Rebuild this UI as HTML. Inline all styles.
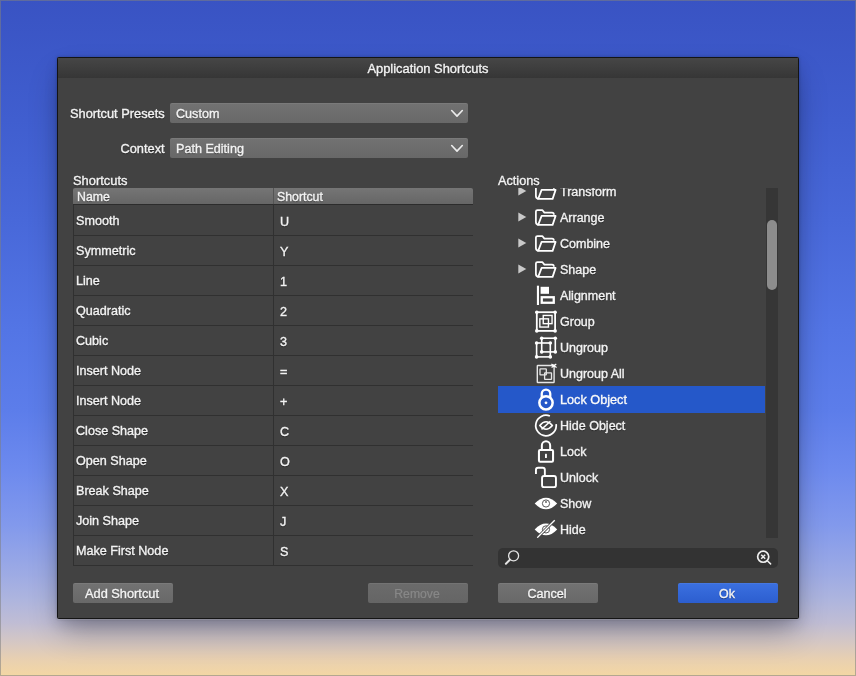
<!DOCTYPE html>
<html lang="en"><head><meta charset="utf-8"><title>Application Shortcuts</title>
<style>
html,body{margin:0;padding:0}
body{width:856px;height:676px;overflow:hidden;position:relative;font-family:"Liberation Sans",sans-serif;
background:linear-gradient(to bottom,#3953c3 0px,#405ecf 120px,#4868d9 220px,#5375e5 330px,#5c7dea 410px,#6d8aee 470px,#8299ec 525px,#9eabe4 575px,#aeb5de 600px,#c0bdd4 623px,#d6c8c3 643px,#e8d0b1 659px,#f4d7a3 676px)}
#frame{position:absolute;left:0;top:0;width:854px;height:674px;border:1px solid rgba(128,128,128,.55);z-index:5;pointer-events:none}
#win{position:absolute;left:57px;top:57px;width:740px;height:560px;border:1px solid #141414;border-radius:1.5px;background:#424242;
box-shadow:0 1px 0 rgba(215,215,225,.22),0 16px 30px -5px rgba(0,0,0,.30),0 6px 14px -2px rgba(0,0,0,.16),0 0 3px rgba(0,0,0,.25)}
#tb{position:absolute;left:0;top:0;width:740px;height:20px;background:linear-gradient(#464646,#363636)}
.a{position:absolute}
.t{position:absolute;line-height:16px;height:16px;white-space:nowrap;color:#f3f3f3;text-shadow:0 1px 1px rgba(0,0,0,.45);-webkit-text-stroke:0.35px #f3f3f3;will-change:transform}
.dd{position:absolute;left:112px;width:298px;height:20px;border-radius:2px;background:linear-gradient(#727272,#686868);box-shadow:inset 0 1px 0 rgba(255,255,255,.06)}
.btn{position:absolute;top:525px;width:100px;height:20px;border-radius:2px;background:linear-gradient(#727272,#686868);box-shadow:inset 0 1px 0 rgba(255,255,255,.06)}
.hl{position:absolute;left:15px;width:400px;height:1px;background:#303030}
.ic{position:absolute;overflow:visible}
</style></head><body>
<div id="win">
<div id="tb"></div>

<div class="t" style="left:-1px;top:3px;font-size:12.9px;width:740px;text-align:center;left:0;">Application Shortcuts</div>
<div class="t" style="left:12px;top:48px;font-size:12.8px;">Shortcut Presets</div>
<div class="t" style="left:12px;top:83px;font-size:12.8px;width:94.6px;text-align:right;">Context</div>
<div class="dd" style="top:45px"></div><div class="dd" style="top:80px"></div>
<svg class="ic" style="left:392px;top:51.400000000000006px" width="14" height="9" viewBox="0 0 14 9"><path d="M1.7 1.5 L7 7.1 L12.3 1.5" fill="none" stroke="#ececec" stroke-width="1.6" stroke-linecap="round" stroke-linejoin="round"/></svg>
<svg class="ic" style="left:392px;top:86.4px" width="14" height="9" viewBox="0 0 14 9"><path d="M1.7 1.5 L7 7.1 L12.3 1.5" fill="none" stroke="#ececec" stroke-width="1.6" stroke-linecap="round" stroke-linejoin="round"/></svg>
<div class="t" style="left:118px;top:48px;font-size:12.6px;">Custom</div>
<div class="t" style="left:118px;top:83px;font-size:12.6px;">Path Editing</div>
<div class="t" style="left:15px;top:115px;font-size:12.9px;">Shortcuts</div>
<div class="t" style="left:440px;top:115px;font-size:12.7px;">Actions</div>
<div class="a" style="left:15px;top:130px;width:400px;height:16px;border-radius:2px 2px 0 0;background:linear-gradient(#757575,#666666)"></div>
<div class="a" style="left:15px;top:146px;width:400px;height:1px;background:#2c2c2c"></div>
<div class="a" style="left:15px;top:147px;width:1px;height:361px;background:#303030"></div>
<div class="a" style="left:215px;top:130px;width:1px;height:16px;background:#545454"></div>
<div class="a" style="left:215px;top:146px;width:1px;height:362px;background:#303030"></div>
<div class="t" style="left:19px;top:131px;font-size:12.3px;">Name</div>
<div class="t" style="left:219.39999999999998px;top:131px;font-size:12.3px;">Shortcut</div>
<div class="t" style="left:18.200000000000003px;top:155px;font-size:12.6px;">Smooth</div>
<div class="t" style="left:222px;top:156px;font-size:12.6px;">U</div>
<div class="hl" style="top:177px"></div>
<div class="t" style="left:18.200000000000003px;top:185px;font-size:12.6px;">Symmetric</div>
<div class="t" style="left:222px;top:186px;font-size:12.6px;">Y</div>
<div class="hl" style="top:207px"></div>
<div class="t" style="left:18.200000000000003px;top:215px;font-size:12.6px;">Line</div>
<div class="t" style="left:222px;top:216px;font-size:12.6px;">1</div>
<div class="hl" style="top:237px"></div>
<div class="t" style="left:18.200000000000003px;top:245px;font-size:12.6px;">Quadratic</div>
<div class="t" style="left:222px;top:246px;font-size:12.6px;">2</div>
<div class="hl" style="top:267px"></div>
<div class="t" style="left:18.200000000000003px;top:275px;font-size:12.6px;">Cubic</div>
<div class="t" style="left:222px;top:276px;font-size:12.6px;">3</div>
<div class="hl" style="top:297px"></div>
<div class="t" style="left:18.200000000000003px;top:305px;font-size:12.6px;">Insert Node</div>
<div class="t" style="left:222px;top:306px;font-size:12.6px;">=</div>
<div class="hl" style="top:327px"></div>
<div class="t" style="left:18.200000000000003px;top:335px;font-size:12.6px;">Insert Node</div>
<div class="t" style="left:222px;top:336px;font-size:12.6px;">+</div>
<div class="hl" style="top:357px"></div>
<div class="t" style="left:18.200000000000003px;top:365px;font-size:12.6px;">Close Shape</div>
<div class="t" style="left:222px;top:366px;font-size:12.6px;">C</div>
<div class="hl" style="top:387px"></div>
<div class="t" style="left:18.200000000000003px;top:395px;font-size:12.6px;">Open Shape</div>
<div class="t" style="left:222px;top:396px;font-size:12.6px;">O</div>
<div class="hl" style="top:417px"></div>
<div class="t" style="left:18.200000000000003px;top:425px;font-size:12.6px;">Break Shape</div>
<div class="t" style="left:222px;top:426px;font-size:12.6px;">X</div>
<div class="hl" style="top:447px"></div>
<div class="t" style="left:18.200000000000003px;top:455px;font-size:12.6px;">Join Shape</div>
<div class="t" style="left:222px;top:456px;font-size:12.6px;">J</div>
<div class="hl" style="top:477px"></div>
<div class="t" style="left:18.200000000000003px;top:485px;font-size:12.6px;">Make First Node</div>
<div class="t" style="left:222px;top:486px;font-size:12.6px;">S</div>
<div class="hl" style="top:507px"></div>
<div class="btn" style="left:15px"></div>
<div class="btn" style="left:310px;background:linear-gradient(#6b6b6b,#656565)"></div>
<div class="btn" style="left:440px"></div>
<div class="btn" style="left:620px;background:linear-gradient(#3b70e0,#2c5ecf)"></div>
<div class="t" style="left:13.799999999999997px;top:528px;font-size:12.8px;width:100px;text-align:center;">Add Shortcut</div>
<div class="t" style="left:309px;top:528px;font-size:12.2px;width:100px;text-align:center;color:#888;text-shadow:none;-webkit-text-stroke:0.2px #888;">Remove</div>
<div class="t" style="left:439px;top:528px;font-size:12.6px;width:100px;text-align:center;">Cancel</div>
<div class="t" style="left:619px;top:528px;font-size:12.4px;width:100px;text-align:center;">Ok</div>
<div class="a" id="list" style="left:440px;top:130px;width:268px;height:350px;overflow:hidden">
<div class="a" style="left:0;top:198px;width:267px;height:27px;background:#2558c9"></div>
<div class="t" style="left:62.0px;top:-4px;font-size:12.5px;">Transform</div>
<svg class="ic" style="left:20.2px;top:-2.4px" width="9" height="10" viewBox="0 0 9 10"><path d="M0.3 0.4 L8.3 4.9 L0.3 9.4 Z" fill="#c9c9c9"/></svg>
<svg class="ic" style="left:36px;top:-6.0px" width="26" height="20" viewBox="0 0 26 20"><path d="M4.4 16.9 Q1.9 16.4 1.9 14 V3.6 Q1.9 2 3.5 2 H8.3 L10.4 4.6 H18 Q19.9 4.6 19.9 6.8" fill="none" stroke="#fff" stroke-width="1.75" stroke-linejoin="round"/><path d="M7.6 7.9 H21.6 L18.6 16.9 H4.2 Z" fill="none" stroke="#fff" stroke-width="1.75" stroke-linejoin="round"/></svg>
<div class="t" style="left:62.0px;top:22px;font-size:12.5px;">Arrange</div>
<svg class="ic" style="left:20.2px;top:23.6px" width="9" height="10" viewBox="0 0 9 10"><path d="M0.3 0.4 L8.3 4.9 L0.3 9.4 Z" fill="#c9c9c9"/></svg>
<svg class="ic" style="left:36px;top:20.0px" width="26" height="20" viewBox="0 0 26 20"><path d="M4.4 16.9 Q1.9 16.4 1.9 14 V3.6 Q1.9 2 3.5 2 H8.3 L10.4 4.6 H18 Q19.9 4.6 19.9 6.8" fill="none" stroke="#fff" stroke-width="1.75" stroke-linejoin="round"/><path d="M7.6 7.9 H21.6 L18.6 16.9 H4.2 Z" fill="none" stroke="#fff" stroke-width="1.75" stroke-linejoin="round"/></svg>
<div class="t" style="left:62.0px;top:48px;font-size:12.5px;">Combine</div>
<svg class="ic" style="left:20.2px;top:49.6px" width="9" height="10" viewBox="0 0 9 10"><path d="M0.3 0.4 L8.3 4.9 L0.3 9.4 Z" fill="#c9c9c9"/></svg>
<svg class="ic" style="left:36px;top:46.0px" width="26" height="20" viewBox="0 0 26 20"><path d="M4.4 16.9 Q1.9 16.4 1.9 14 V3.6 Q1.9 2 3.5 2 H8.3 L10.4 4.6 H18 Q19.9 4.6 19.9 6.8" fill="none" stroke="#fff" stroke-width="1.75" stroke-linejoin="round"/><path d="M7.6 7.9 H21.6 L18.6 16.9 H4.2 Z" fill="none" stroke="#fff" stroke-width="1.75" stroke-linejoin="round"/></svg>
<div class="t" style="left:62.0px;top:74px;font-size:12.5px;">Shape</div>
<svg class="ic" style="left:20.2px;top:75.6px" width="9" height="10" viewBox="0 0 9 10"><path d="M0.3 0.4 L8.3 4.9 L0.3 9.4 Z" fill="#c9c9c9"/></svg>
<svg class="ic" style="left:36px;top:72.0px" width="26" height="20" viewBox="0 0 26 20"><path d="M4.4 16.9 Q1.9 16.4 1.9 14 V3.6 Q1.9 2 3.5 2 H8.3 L10.4 4.6 H18 Q19.9 4.6 19.9 6.8" fill="none" stroke="#fff" stroke-width="1.75" stroke-linejoin="round"/><path d="M7.6 7.9 H21.6 L18.6 16.9 H4.2 Z" fill="none" stroke="#fff" stroke-width="1.75" stroke-linejoin="round"/></svg>
<div class="t" style="left:62.0px;top:100px;font-size:12.5px;">Alignment</div>
<div class="t" style="left:62.0px;top:126px;font-size:12.5px;">Group</div>
<div class="t" style="left:62.0px;top:152px;font-size:12.5px;">Ungroup</div>
<div class="t" style="left:62.0px;top:178px;font-size:12.5px;">Ungroup All</div>
<div class="t" style="left:62.0px;top:204px;font-size:12.7px;text-shadow:none;color:#fff;">Lock Object</div>
<div class="t" style="left:62.0px;top:230px;font-size:12.5px;">Hide Object</div>
<div class="t" style="left:62.0px;top:256px;font-size:12.5px;">Lock</div>
<div class="t" style="left:62.0px;top:282px;font-size:12.5px;">Unlock</div>
<div class="t" style="left:62.0px;top:308px;font-size:12.5px;">Show</div>
<div class="t" style="left:62.0px;top:334px;font-size:12.5px;">Hide</div>
<!-- Alignment : abs origin 528,282 -->
<svg class="ic" style="left:30px;top:94px" width="36" height="28" viewBox="0 0 36 28"><rect x="8.9" y="3.7" width="2.1" height="19.3" fill="#fff"/><rect x="12.6" y="4.8" width="8.4" height="7" fill="#fff"/><rect x="13.75" y="15.25" width="12" height="5.5" fill="none" stroke="#fff" stroke-width="2.3"/></svg>
<!-- Group : origin 528,308 -->
<svg class="ic" style="left:30px;top:120px" width="36" height="28" viewBox="0 0 36 28"><rect x="8.8" y="4.2" width="18.3" height="18.7" fill="none" stroke="#fff" stroke-width="1.8"/><g fill="#fff"><circle cx="8.8" cy="4.2" r="1.8"/><circle cx="27.1" cy="4.2" r="1.8"/><circle cx="8.8" cy="22.9" r="1.8"/><circle cx="27.1" cy="22.9" r="1.8"/></g><rect x="15.25" y="7.45" width="8.8" height="8.2" fill="none" stroke="#fff" stroke-width="1.4"/><rect x="11.85" y="10.85" width="8.6" height="8.2" fill="none" stroke="#fff" stroke-width="1.4"/></svg>
<!-- Ungroup : origin 528,334 -->
<svg class="ic" style="left:30px;top:146px" width="36" height="28" viewBox="0 0 36 28"><rect x="13.7" y="4.2" width="13.6" height="13.7" fill="none" stroke="#fff" stroke-width="1.6"/><rect x="8.6" y="9" width="13.7" height="13.9" fill="none" stroke="#fff" stroke-width="1.6"/><g fill="#fff"><circle cx="13.7" cy="4.2" r="1.8"/><circle cx="27.3" cy="4.2" r="1.8"/><circle cx="13.7" cy="17.9" r="1.8"/><circle cx="27.3" cy="17.9" r="1.8"/><circle cx="8.6" cy="9" r="1.8"/><circle cx="22.3" cy="9" r="1.8"/><circle cx="8.6" cy="22.9" r="1.8"/><circle cx="22.3" cy="22.9" r="1.8"/></g></svg>
<!-- Ungroup All : origin 528,360 -->
<svg class="ic" style="left:30px;top:172px" width="36" height="28" viewBox="0 0 36 28"><rect x="9.3" y="5.5" width="16.8" height="17" rx="0.6" fill="none" stroke="#e6e6e6" stroke-width="1.4"/><rect x="12" y="8.8" width="6.3" height="6.1" rx="0.4" fill="none" stroke="#e6e6e6" stroke-width="1.3"/><rect x="16.6" y="12.8" width="6.9" height="6.5" rx="0.4" fill="none" stroke="#e6e6e6" stroke-width="1.3"/><path d="M23.4 4.1 L28.6 7.6 M28.3 3.9 L23.6 7.5" stroke="#fff" stroke-width="1.2" fill="none"/><circle cx="25.9" cy="5.8" r="1.3" fill="#fff"/></svg>
<!-- Lock Object : origin 528,386 -->
<svg class="ic" style="left:30px;top:198px" width="36" height="28" viewBox="0 0 36 28"><circle cx="18" cy="16.8" r="6.65" fill="none" stroke="#fff" stroke-width="2.5"/><circle cx="18" cy="16.8" r="1.4" fill="#fff"/><path d="M13.75 11.6 V7.8 A4.25 4.25 0 0 1 22.25 7.8 V11.6" fill="none" stroke="#fff" stroke-width="2.3"/></svg>
<!-- Hide Object : origin 528,412 -->
<svg class="ic" style="left:30px;top:224px" width="36" height="28" viewBox="0 0 36 28"><path d="M28.15 12.1 A10.25 10.25 0 1 1 21.9 4.05" fill="none" stroke="#fff" stroke-width="1.75"/><path d="M11.8 13.5 Q18 6 24.4 13.5 Q18 21 11.8 13.5 Z" fill="none" stroke="#fff" stroke-width="1.6" stroke-linejoin="round"/><path d="M22.4 9.3 L13.5 17.4" stroke="#fff" stroke-width="1.5" fill="none"/></svg>
<!-- Lock : origin 528,438 -->
<svg class="ic" style="left:30px;top:250px" width="36" height="28" viewBox="0 0 36 28"><rect x="10.95" y="11.95" width="14.1" height="11.8" rx="1.2" fill="none" stroke="#fff" stroke-width="2.05"/><path d="M13.85 11.2 V7.45 A4.15 4.15 0 0 1 22.15 7.45 V11.2" fill="none" stroke="#fff" stroke-width="2.0"/><rect x="17" y="15.8" width="1.9" height="4.2" rx="0.5" fill="#fff"/></svg>
<!-- Unlock : origin 528,464 -->
<svg class="ic" style="left:30px;top:276px" width="36" height="28" viewBox="0 0 36 28"><rect x="14.05" y="11.95" width="13.9" height="11.2" rx="2" fill="none" stroke="#fff" stroke-width="1.9"/><path d="M7.95 10.1 V5.9 Q7.95 3.75 10.1 3.75 H14.7 Q16.85 3.75 16.85 5.9 V11" fill="none" stroke="#fff" stroke-width="1.9"/></svg>
<!-- Show : origin 528,490 -->
<svg class="ic" style="left:30px;top:302px" width="36" height="28" viewBox="0 0 36 28"><path d="M6.7 13.5 Q18 1.8 29.2 13.5 Q18 25.2 6.7 13.5 Z" fill="#fff"/><circle cx="18" cy="13.5" r="3.6" fill="none" stroke="#444" stroke-width="0.9"/><circle cx="18" cy="12" r="0.9" fill="#555"/></svg>
<!-- Hide : origin 528,516 -->
<svg class="ic" style="left:30px;top:328px" width="36" height="28" viewBox="0 0 36 28"><path d="M6.7 13.4 Q18 1.7 29.2 13.4 Q18 25.1 6.7 13.4 Z" fill="#fff"/><circle cx="18" cy="13.4" r="3.6" fill="none" stroke="#444" stroke-width="0.9"/><path d="M26.7 4.2 L9.25 21.7" stroke="#424242" stroke-width="3" fill="none"/><path d="M26.7 4.2 L9.25 21.7" stroke="#fff" stroke-width="1.3" fill="none"/></svg>

</div>
<div class="a" style="left:708px;top:130px;width:12px;height:350px;background:#363636"></div>
<div class="a" style="left:709px;top:162px;width:10px;height:70px;border-radius:5px;background:#8d8d8d"></div>
<div class="a" style="left:440px;top:490px;width:280px;height:20px;border-radius:5px;background:#333"></div>

<!-- search icons, relative to #win content origin (58,58) -->
<svg class="ic" style="left:442px;top:482px" width="30" height="36" viewBox="0 0 30 36"><circle cx="13.6" cy="15.8" r="5" fill="none" stroke="#e4e4e4" stroke-width="1.3"/><path d="M9.9 19.7 L5.9 23.7" stroke="#e4e4e4" stroke-width="2" stroke-linecap="round" fill="none"/></svg>
<svg class="ic" style="left:687px;top:484px" width="40" height="32" viewBox="0 0 40 32"><circle cx="18.2" cy="14.7" r="5.55" fill="none" stroke="#f0f0f0" stroke-width="1.7"/><path d="M16.2 12.7 L20.2 16.7 M20.2 12.7 L16.2 16.7" stroke="#f0f0f0" stroke-width="1.5" fill="none"/><path d="M22.3 18.8 L25.6 21.9" stroke="#f0f0f0" stroke-width="1.5" stroke-linecap="round" fill="none"/></svg>

</div><div id="frame"></div></body></html>
